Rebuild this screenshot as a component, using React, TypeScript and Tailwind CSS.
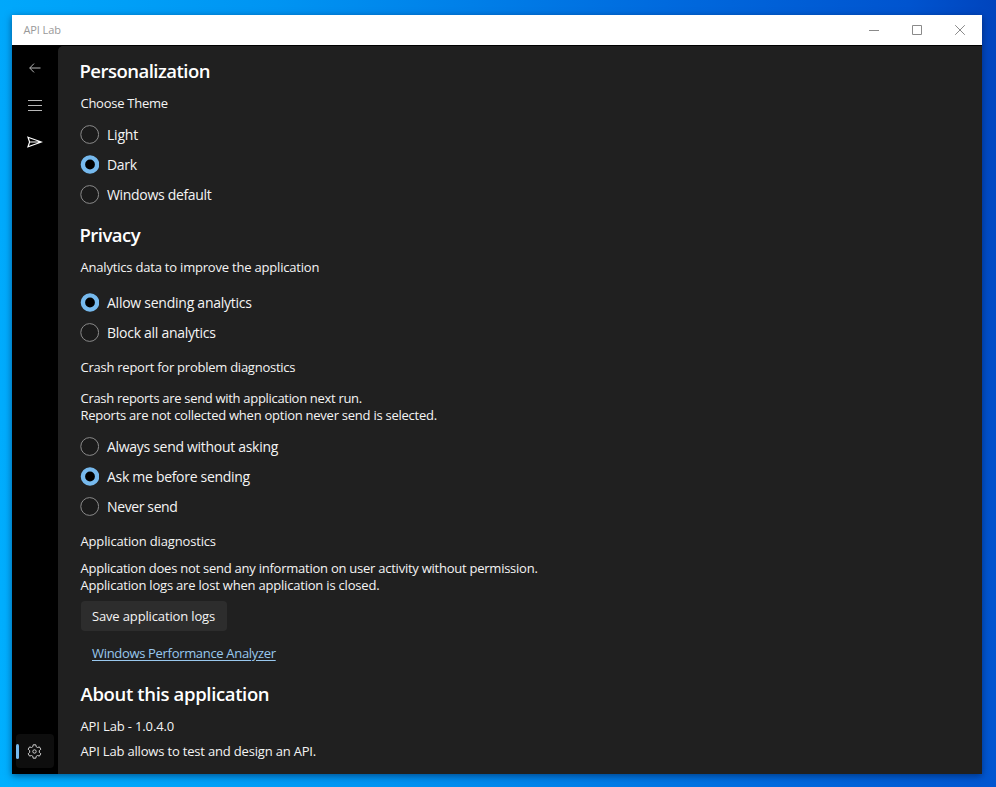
import { useState } from "react";

interface RadioGroupProps {
  name: string;
  options: { label: string; spacing: string }[];
  initial: number;
  className: string;
}

const RadioGroup = ({ name, options, initial, className }: RadioGroupProps) => {
  const [selected, setSelected] = useState(initial);

  return (
    <div className={className} role="radiogroup">
      {options.map((option, index) => (
        <label key={option.label} className="flex h-[30px] items-center gap-2 text-[14px]">
          <input
            type="radio"
            name={name}
            checked={selected === index}
            onChange={() => setSelected(index)}
            className="sr-only"
          />
          <svg className="-ml-px" width="19" height="19" viewBox="0 0 19 19">
            {selected === index ? (
              <circle cx="10" cy="9.5" r="7.1" fill="#000000" stroke="#76b9ed" strokeWidth="4.4" className="origin-center" />
            ) : (
              <circle cx="9.7" cy="9.5" r="8.9" fill="#1b1b1b" stroke="#8a8a8a" />
            )}
          </svg>
          <span className={option.spacing}>{option.label}</span>
        </label>
      ))}
    </div>
  );
};

const TitleBar = () => (
  <header className="flex h-[30px] shrink-0 items-center justify-between bg-white pl-[11.5px]">
    <span className="text-[11px] tracking-[-0.1px] text-[#999999]">API Lab</span>
    <div className="flex text-[#8a8a8a]">
      <button className="flex h-[30px] w-[43px] items-center justify-center" aria-label="Minimize">
        <svg width="10" height="10" viewBox="0 0 10 10" stroke="currentColor" fill="none">
          <path d="M0 5.5h10" />
        </svg>
      </button>
      <button className="flex h-[30px] w-[43px] items-center justify-center" aria-label="Maximize">
        <svg width="10" height="10" viewBox="0 0 10 10" stroke="currentColor" fill="none">
          <path d="M.5.5h9v9h-9z" />
        </svg>
      </button>
      <button className="mr-px flex h-[30px] w-[43px] items-center justify-center" aria-label="Close">
        <svg width="10" height="10" viewBox="0 0 10 10" stroke="currentColor" fill="none">
          <path d="M.2.2l9.6 9.6M9.8.2L.2 9.8" />
        </svg>
      </button>
    </div>
  </header>
);

const Rail = () => (
  <nav className="flex w-[46px] shrink-0 flex-col items-center bg-black pt-1 text-white">
    <button className="flex h-[37px] w-[38px] items-center justify-center pr-px" aria-label="Back">
      <svg width="12" height="10" viewBox="0 0 12 10" stroke="#b5b5b5" fill="none">
        <path d="M11.5 5H.8M5 .6L.7 5 5 9.4" />
      </svg>
    </button>
    <button className="flex h-[37px] w-[38px] items-center justify-center pt-px pr-px" aria-label="Menu">
      <svg width="14" height="11" viewBox="0 0 14 11" stroke="#b8b8b8" fill="none">
        <path d="M0 .5h14M0 5.5h14M0 10.5h14" />
      </svg>
    </button>
    <button className="flex h-[37px] w-[38px] items-center justify-center pt-px pr-px" aria-label="Send">
      <svg width="16" height="12" viewBox="0 0 16 12" stroke="currentColor" strokeWidth="1.2" fill="none">
        <path d="M1 1.3l13.5 4.7L1 10.700l1.600-4.700zM2.600 6H14" />
      </svg>
    </button>
    <button
      className="mt-auto mb-[6px] flex h-[34px] w-[38px] items-center rounded-[4px] bg-[#0e0e0e]"
      aria-label="Settings"
    >
      <span className="h-[15px] w-[3px] rounded-full bg-[#76b9ed]" />
      <svg className="ml-[8px]" width="15" height="15" viewBox="-.5 -.5 15 15" stroke="#d0d0d0" strokeLinejoin="round" fill="none">
        <path d="M5.700 .3h2.600l.4 1.900 1.300.8 1.900-.6L13.300 4.700l-1.500 1.500v1.600l1.500 1.500-1.400 2.300-1.900-.6-1.300.8-.4 1.900H5.700l-.4-1.900-1.300-.8-1.900.6L.7 9.300l1.500-1.500V6.200L.7 4.700l1.400-2.300 1.900.6 1.300-.8z" />
        <circle cx="7" cy="7" r="1.7" />
      </svg>
    </button>
  </nav>
);

const App = () => {
  return (
    <div className="h-[787px] w-[996px] overflow-hidden bg-[linear-gradient(82deg,#00b0ff_0%,#0094f2_35%,#006ade_70%,#0054cf_92%,#0044bd_100%)] pt-[15px] pl-3 font-['Open_Sans','Noto_Sans',sans-serif]">
      <div className="flex h-[759px] w-[970px] flex-col shadow-[0_2px_7px_rgba(0,20,60,0.55)]">
        <TitleBar />
        <div className="flex min-h-0 flex-1 bg-black">
          <Rail />
          <main className="mt-px flex flex-1 flex-col items-start rounded-tl-[5px] bg-[#202020] pt-3 pl-[22.5px] text-[13px] leading-[17px] text-[#f4f4f4]">
            <h2 className="-ml-px text-[18.5px] leading-[26px] font-semibold tracking-[-0.52px] text-white">
              Personalization
            </h2>
            <p className="mt-[11px] tracking-[-0.27px]">Choose Theme</p>
            <RadioGroup
              name="theme"
              className="mt-[7px] ml-[0.5px]"
              initial={1}
              options={[
                { label: "Light", spacing: "tracking-[-0.2px]" },
                { label: "Dark", spacing: "tracking-[-0.3px]" },
                { label: "Windows default", spacing: "tracking-[-0.32px]" },
              ]}
            />

            <h2 className="mt-[13px] -ml-px text-[18.5px] leading-[26px] font-semibold tracking-[-0.52px] text-white">
              Privacy
            </h2>
            <p className="mt-[11px] tracking-[-0.2px]">Analytics data to improve the application</p>
            <RadioGroup
              name="analytics"
              className="mt-[11px] ml-[0.5px]"
              initial={0}
              options={[
                { label: "Allow sending analytics", spacing: "tracking-[-0.25px]" },
                { label: "Block all analytics", spacing: "tracking-[-0.27px]" },
              ]}
            />

            <p className="mt-3 tracking-[-0.25px]">Crash report for problem diagnostics</p>
            <p className="mt-[14px] tracking-[-0.31px]">Crash reports are send with application next run.</p>
            <p className="tracking-[-0.25px]">Reports are not collected when option never send is selected.</p>
            <RadioGroup
              name="crash"
              className="mt-[7px] ml-[0.5px]"
              initial={1}
              options={[
                { label: "Always send without asking", spacing: "tracking-[-0.3px]" },
                { label: "Ask me before sending", spacing: "tracking-[-0.3px]" },
                { label: "Never send", spacing: "tracking-[-0.38px]" },
              ]}
            />

            <p className="mt-3 tracking-[-0.16px]">Application diagnostics</p>
            <p className="mt-[10px] tracking-[-0.245px]">
              Application does not send any information on user activity without permission.
            </p>
            <p className="tracking-[-0.2px]">Application logs are lost when application is closed.</p>
            <button className="mt-[7px] ml-[0.5px] h-[30px] w-[146px] rounded-[4px] bg-[#2d2d2d] pr-px tracking-[-0.14px] whitespace-nowrap">
              Save application logs
            </button>
            <a
              className="mt-[14px] ml-[11.5px] tracking-[-0.32px] text-[#99c8ee] underline underline-offset-2"
              href="#"
            >
              Windows Performance Analyzer
            </a>

            <h2 className="mt-[19px] text-[18.5px] leading-[26px] font-semibold tracking-[-0.35px] text-white">
              About this application
            </h2>
            <p className="mt-[11px] tracking-[-0.14px]">API Lab - 1.0.4.0</p>
            <p className="mt-2 tracking-[-0.18px]">API Lab allows to test and design an API.</p>
          </main>
        </div>
      </div>
    </div>
  );
};

export default App;
